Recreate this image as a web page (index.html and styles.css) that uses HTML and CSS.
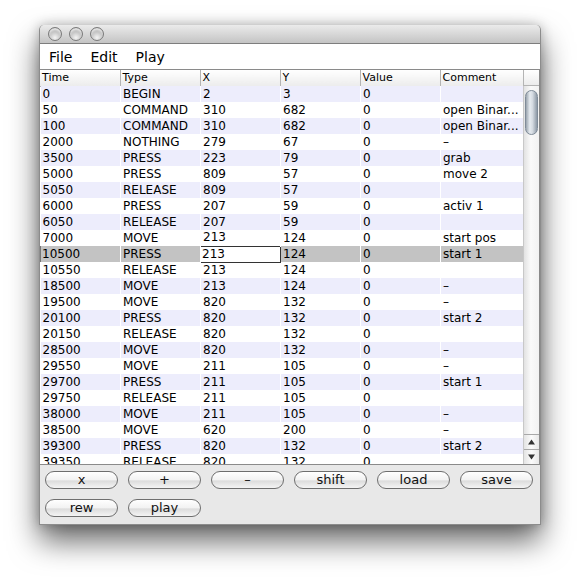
FILE: index.html
```html
<!DOCTYPE html>
<html lang="en">
<head>
  <meta charset="UTF-8" />
  <title>Event Player</title>
  <link rel="stylesheet" href="styles.css">
</head>
<body>

  <!-- window -->
  <div class="window">
    <div class="titlebar">
      <span class="light"></span>
      <span class="light"></span>
      <span class="light"></span>
    </div>

    <div class="menubar">
      <span>File</span>
      <span>Edit</span>
      <span>Play</span>
    </div>

    <!-- event table -->
    <div class="pane">
      <div class="head">
        <table class="grid">
          <tr>
            <th>Time</th><th>Type</th><th>X</th><th>Y</th><th>Value</th><th>Comment</th>
          </tr>
        </table>
        <div class="corner"></div>
      </div>
      <div class="body">
        <div class="rows">
          <table class="grid">
            <tr><td>0</td><td>BEGIN</td><td>2</td><td>3</td><td>0</td><td></td></tr>
            <tr><td>50</td><td>COMMAND</td><td>310</td><td>682</td><td>0</td><td>open Binar...</td></tr>
            <tr><td>100</td><td>COMMAND</td><td>310</td><td>682</td><td>0</td><td>open Binar...</td></tr>
            <tr><td>2000</td><td>NOTHING</td><td>279</td><td>67</td><td>0</td><td>–</td></tr>
            <tr><td>3500</td><td>PRESS</td><td>223</td><td>79</td><td>0</td><td>grab</td></tr>
            <tr><td>5000</td><td>PRESS</td><td>809</td><td>57</td><td>0</td><td>move 2</td></tr>
            <tr><td>5050</td><td>RELEASE</td><td>809</td><td>57</td><td>0</td><td></td></tr>
            <tr><td>6000</td><td>PRESS</td><td>207</td><td>59</td><td>0</td><td>activ 1</td></tr>
            <tr><td>6050</td><td>RELEASE</td><td>207</td><td>59</td><td>0</td><td></td></tr>
            <tr><td>7000</td><td>MOVE</td><td>213</td><td>124</td><td>0</td><td>start pos</td></tr>
            <tr class="selected"><td>10500</td><td>PRESS</td><td class="editing">213</td><td>124</td><td>0</td><td>start 1</td></tr>
            <tr><td>10550</td><td>RELEASE</td><td>213</td><td>124</td><td>0</td><td></td></tr>
            <tr><td>18500</td><td>MOVE</td><td>213</td><td>124</td><td>0</td><td>–</td></tr>
            <tr><td>19500</td><td>MOVE</td><td>820</td><td>132</td><td>0</td><td>–</td></tr>
            <tr><td>20100</td><td>PRESS</td><td>820</td><td>132</td><td>0</td><td>start 2</td></tr>
            <tr><td>20150</td><td>RELEASE</td><td>820</td><td>132</td><td>0</td><td></td></tr>
            <tr><td>28500</td><td>MOVE</td><td>820</td><td>132</td><td>0</td><td>–</td></tr>
            <tr><td>29550</td><td>MOVE</td><td>211</td><td>105</td><td>0</td><td>–</td></tr>
            <tr><td>29700</td><td>PRESS</td><td>211</td><td>105</td><td>0</td><td>start 1</td></tr>
            <tr><td>29750</td><td>RELEASE</td><td>211</td><td>105</td><td>0</td><td></td></tr>
            <tr><td>38000</td><td>MOVE</td><td>211</td><td>105</td><td>0</td><td>–</td></tr>
            <tr><td>38500</td><td>MOVE</td><td>620</td><td>200</td><td>0</td><td>–</td></tr>
            <tr><td>39300</td><td>PRESS</td><td>820</td><td>132</td><td>0</td><td>start 2</td></tr>
            <tr><td>39350</td><td>RELEASE</td><td>820</td><td>132</td><td>0</td><td></td></tr>
          </table>
        </div>
        <div class="scrollbar">
          <div class="track"><div class="thumb"></div></div>
          <div class="arrow"><svg width="7" height="6" viewBox="0 0 7 6"><path d="M3.5 0.5 L7 5.5 L0 5.5 Z" fill="#333"/></svg></div>
          <div class="arrow"><svg width="7" height="6" viewBox="0 0 7 6"><path d="M0 0.5 L7 0.5 L3.5 5.5 Z" fill="#333"/></svg></div>
        </div>
      </div>
    </div>

    <!-- controls -->
    <div class="buttons">
      <button>x</button>
      <button>+</button>
      <button>–</button>
      <button>shift</button>
      <button>load</button>
      <button>save</button>
      <button>rew</button>
      <button>play</button>
    </div>
  </div>

</body>
</html>
```

FILE: styles.css
```css
* {
  margin: 0;
  padding: 0;
  box-sizing: border-box;
}

html, body {
  height: 100%;
}

body {
  background: #fff;
  font-family: 'DejaVu Sans', 'Liberation Sans', sans-serif;
  color: #000;
  padding: 25px 0 0 39px;
}

.window {
  width: 502px;
  height: 500px;
  border: 1px solid #8c8c8c;
  border-top: none;
  background: #e8e8e8;
  border-radius: 5px 5px 0 0;
  box-shadow: 0 16px 30px rgba(0, 0, 0, 0.6), 0 0 12px rgba(0, 0, 0, 0.25);
  display: flex;
  flex-direction: column;
}

.titlebar {
  height: 19px;
  background: linear-gradient(#ebebeb, #c4c4c4);
  border-bottom: 1px solid #7d7d7d;
  border-radius: 5px 5px 0 0;
  display: flex;
  align-items: center;
  gap: 7px;
  padding-left: 8px;
}

.light {
  width: 14px;
  height: 14px;
  border-radius: 50%;
  border: 1px solid #7a7a7a;
  background: radial-gradient(circle at 50% 80%, #f4f4f4 0%, #c9c9c9 45%, #9a9a9a 100%);
  box-shadow: inset 0 2px 2px rgba(255, 255, 255, 0.7);
}

.menubar {
  height: 25px;
  background: #fff;
  display: flex;
  align-items: center;
  gap: 18px;
  padding-left: 9px;
  font-size: 14px;
}

.pane {
  border-top: 1px solid #8a8a8a;
  border-right: 1px solid #8a8a8a;
  background: #fff;
  width: 500px;
}

.head {
  display: flex;
  height: 16px;
}

.grid {
  border-collapse: collapse;
  table-layout: fixed;
  width: 483px;
  font-size: 12px;
}

.grid th,
.grid td {
  width: 80px;
  height: 16px;
  padding: 0 0 0 2px;
  text-align: left;
  white-space: nowrap;
  overflow: hidden;
  line-height: 15px;
}

.grid th:last-child,
.grid td:last-child {
  width: 83px;
}

.grid th {
  font-weight: normal;
  font-size: 11px;
  background: linear-gradient(#ffffff, #ececec);
  border-right: 1px solid #b4b4b4;
  border-bottom: 1px solid #b4b4b4;
}

.corner {
  width: 16px;
  background: linear-gradient(#ffffff, #ececec);
  border-bottom: 1px solid #b4b4b4;
}

.body {
  display: flex;
  height: 379px;
  border-bottom: 1px solid #8a8a8a;
}

.rows {
  width: 483px;
  overflow: hidden;
}

.grid td {
  border-right: 1px solid #fff;
}

.rows tr:nth-child(odd) td {
  background: #ededfc;
}

.rows tr.selected td {
  background: #c3c3c3;
}

.rows tr.selected td:first-child {
  border-left: 1px solid #777;
  padding-left: 1px;
}

.rows tr.selected td.editing {
  background: #fff;
  border: 1px solid #333;
  padding-left: 1px;
}

.scrollbar {
  width: 16px;
  display: flex;
  flex-direction: column;
  border-left: 1px solid #c8c8c8;
}

.track {
  flex: 1;
  background: linear-gradient(90deg, #e2e2e2, #fafafa 45%, #f2f2f2);
  padding: 4px 1px 0;
}

.thumb {
  height: 45px;
  border-radius: 7px;
  border: 1px solid #7f8b98;
  background: linear-gradient(90deg, #9aa4ae, #e6ebf0 35%, #d4dae1 60%, #8d99a6);
}

.arrow {
  height: 15px;
  display: flex;
  align-items: center;
  justify-content: center;
  border-top: 1px solid #a8a8a8;
  background: linear-gradient(90deg, #e4e4e4, #fbfbfb 50%, #e8e8e8);
}

.buttons {
  flex: 1;
  display: grid;
  grid-template-columns: repeat(6, 73px);
  grid-auto-rows: 18px;
  column-gap: 10px;
  row-gap: 10px;
  padding: 6px 0 0 5px;
}

button {
  font-family: 'DejaVu Sans', 'Liberation Sans', sans-serif;
  font-size: 13px;
  color: #111;
  border: 1px solid #6e6e6e;
  border-radius: 9px;
  background: linear-gradient(#ffffff, #f2f2f2 50%, #dcdcdc 55%, #f4f4f4);
  line-height: 14px;
}
```
